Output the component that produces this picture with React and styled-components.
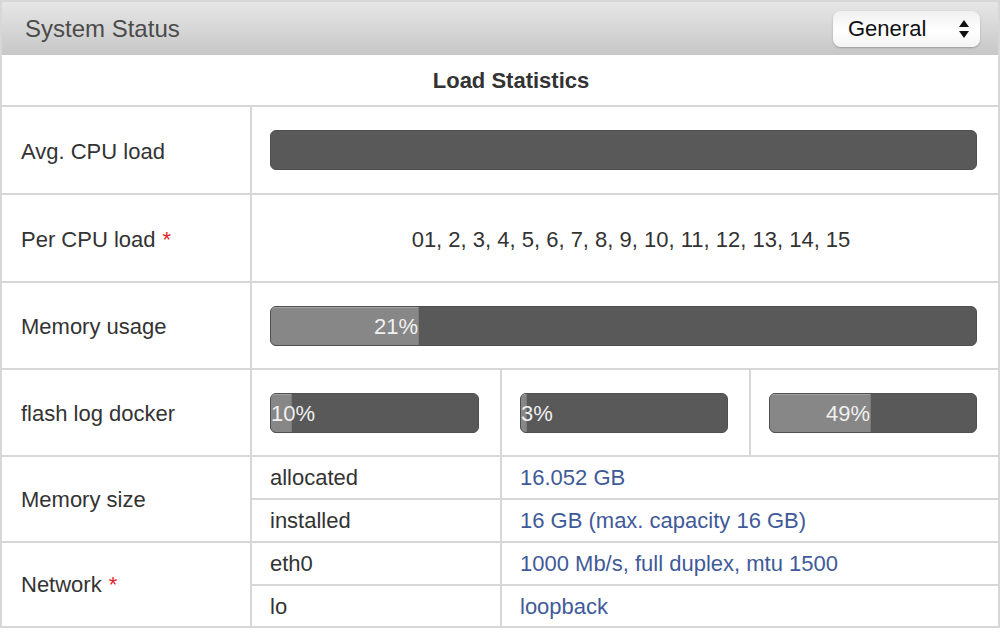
import React from "react";
import styled, { createGlobalStyle } from "styled-components";

const GlobalStyle = createGlobalStyle`
  html, body {
    margin: 0;
    padding: 0;
    background: #ffffff;
    font-family: "Liberation Sans", Arial, sans-serif;
  }
`;

const Panel = styled.div`
  width: 1000px;
  box-sizing: border-box;
  border: 2px solid #d7d7d7;
  border-bottom: none;
  background: #ffffff;
`;

const Header = styled.div`
  height: 53px;
  display: flex;
  align-items: center;
  justify-content: space-between;
  padding: 0 18px 0 23px;
  background: linear-gradient(#e6e6e6, #c7c7c7);
`;

const Title = styled.h2`
  margin: 0;
  font-size: 24px;
  font-weight: normal;
  color: #4b4b4b;
`;

const Select = styled.div`
  width: 147px;
  height: 36px;
  box-sizing: border-box;
  display: flex;
  align-items: center;
  justify-content: space-between;
  padding: 0 10px 0 15px;
  border-radius: 8px;
  background: linear-gradient(#f0f0f0, #ffffff 55%, #f4f4f4);
  box-shadow: 0 1px 2px rgba(0, 0, 0, 0.25);
  font-size: 22px;
  color: #111;
`;

const Arrows = styled.svg`
  width: 12px;
  height: 22px;
`;

const Grid = styled.div`
  display: grid;
  grid-template-columns: 248px 248px 247px 247px;
  grid-template-rows: 50px 86px 86px 85px 85px 41px 41px 41px 40px;
  gap: 2px;
  background: #d7d7d7;
  padding-bottom: 2px;
`;

const Cell = styled.div`
  background: #ffffff;
  display: flex;
  align-items: center;
  box-sizing: border-box;
  padding: 1px 21px 0 18px;
  min-width: 0;
  font-size: 22px;
  color: ${(p) => (p.$link ? "#3f5a99" : "#333333")};
  grid-column: ${(p) => p.$span || "auto"};
  grid-row: ${(p) => p.$rows || "auto"};
`;

const BarCell = styled(Cell)`
  padding-top: 0;
`;

const CenterCell = styled(Cell)`
  justify-content: center;
  padding: 3px 20px 0 32px;
`;

const Caption = styled(Cell)`
  grid-column: 1 / -1;
  justify-content: center;
  font-weight: bold;
  padding: 2px 0 0 22px;
`;

const Label = styled(Cell)`
  padding-left: 19px;
  padding-top: ${(p) => (p.$tall ? "3px" : "1px")};
`;

const Star = styled.span`
  color: #e3262a;
  margin-left: 7px;
`;

const Bar = styled.div`
  flex: 1;
  height: 40px;
  box-sizing: border-box;
  border-radius: 6px;
  background: #595959;
  border: 1px solid #4f4f4f;
`;

const Fill = styled.div`
  height: 100%;
  box-sizing: border-box;
  border-radius: 5px 0 0 5px;
  background: #878787;
  border-top: 1px solid #a2a2a2;
  border-right: 1px solid #7a7a7a;
  color: #f0f0f0;
  font-size: 22px;
  line-height: 38px;
  white-space: nowrap;
  text-align: right;
`;

const Progress = ({ value }) => (
  <Bar>
    {value !== undefined && <Fill style={{ width: `${value}%` }}>{value}%</Fill>}
  </Bar>
);

const cpus = "01, 2, 3, 4, 5, 6, 7, 8, 9, 10, 11, 12, 13, 14, 15";

export default function App() {
  return (
    <>
      <GlobalStyle />
      <Panel>
        <Header>
          <Title>System Status</Title>
          <Select>
            General
            <Arrows viewBox="0 0 12 22">
              <path d="M6 2 L11 9 H1 Z" fill="#111" />
              <path d="M6 20 L11 13 H1 Z" fill="#111" />
            </Arrows>
          </Select>
        </Header>
        <Grid>
          <Caption>Load Statistics</Caption>

          <Label $tall>Avg. CPU load</Label>
          <BarCell $span="2 / 5">
            <Progress />
          </BarCell>

          <Label $tall>
            Per CPU load<Star>*</Star>
          </Label>
          <CenterCell $span="2 / 5">{cpus}</CenterCell>

          <Label $tall>Memory usage</Label>
          <BarCell $span="2 / 5">
            <Progress value={21} />
          </BarCell>

          <Label $tall>flash log docker</Label>
          <BarCell>
            <Progress value={10} />
          </BarCell>
          <BarCell>
            <Progress value={3} />
          </BarCell>
          <BarCell>
            <Progress value={49} />
          </BarCell>

          <Label $rows="span 2">Memory size</Label>
          <Cell>allocated</Cell>
          <Cell $span="3 / 5" $link>
            16.052 GB
          </Cell>
          <Cell>installed</Cell>
          <Cell $span="3 / 5" $link>
            16 GB (max. capacity 16 GB)
          </Cell>

          <Label $rows="span 2">
            Network<Star>*</Star>
          </Label>
          <Cell>eth0</Cell>
          <Cell $span="3 / 5" $link>
            1000 Mb/s, full duplex, mtu 1500
          </Cell>
          <Cell>lo</Cell>
          <Cell $span="3 / 5" $link>
            loopback
          </Cell>
        </Grid>
      </Panel>
    </>
  );
}
